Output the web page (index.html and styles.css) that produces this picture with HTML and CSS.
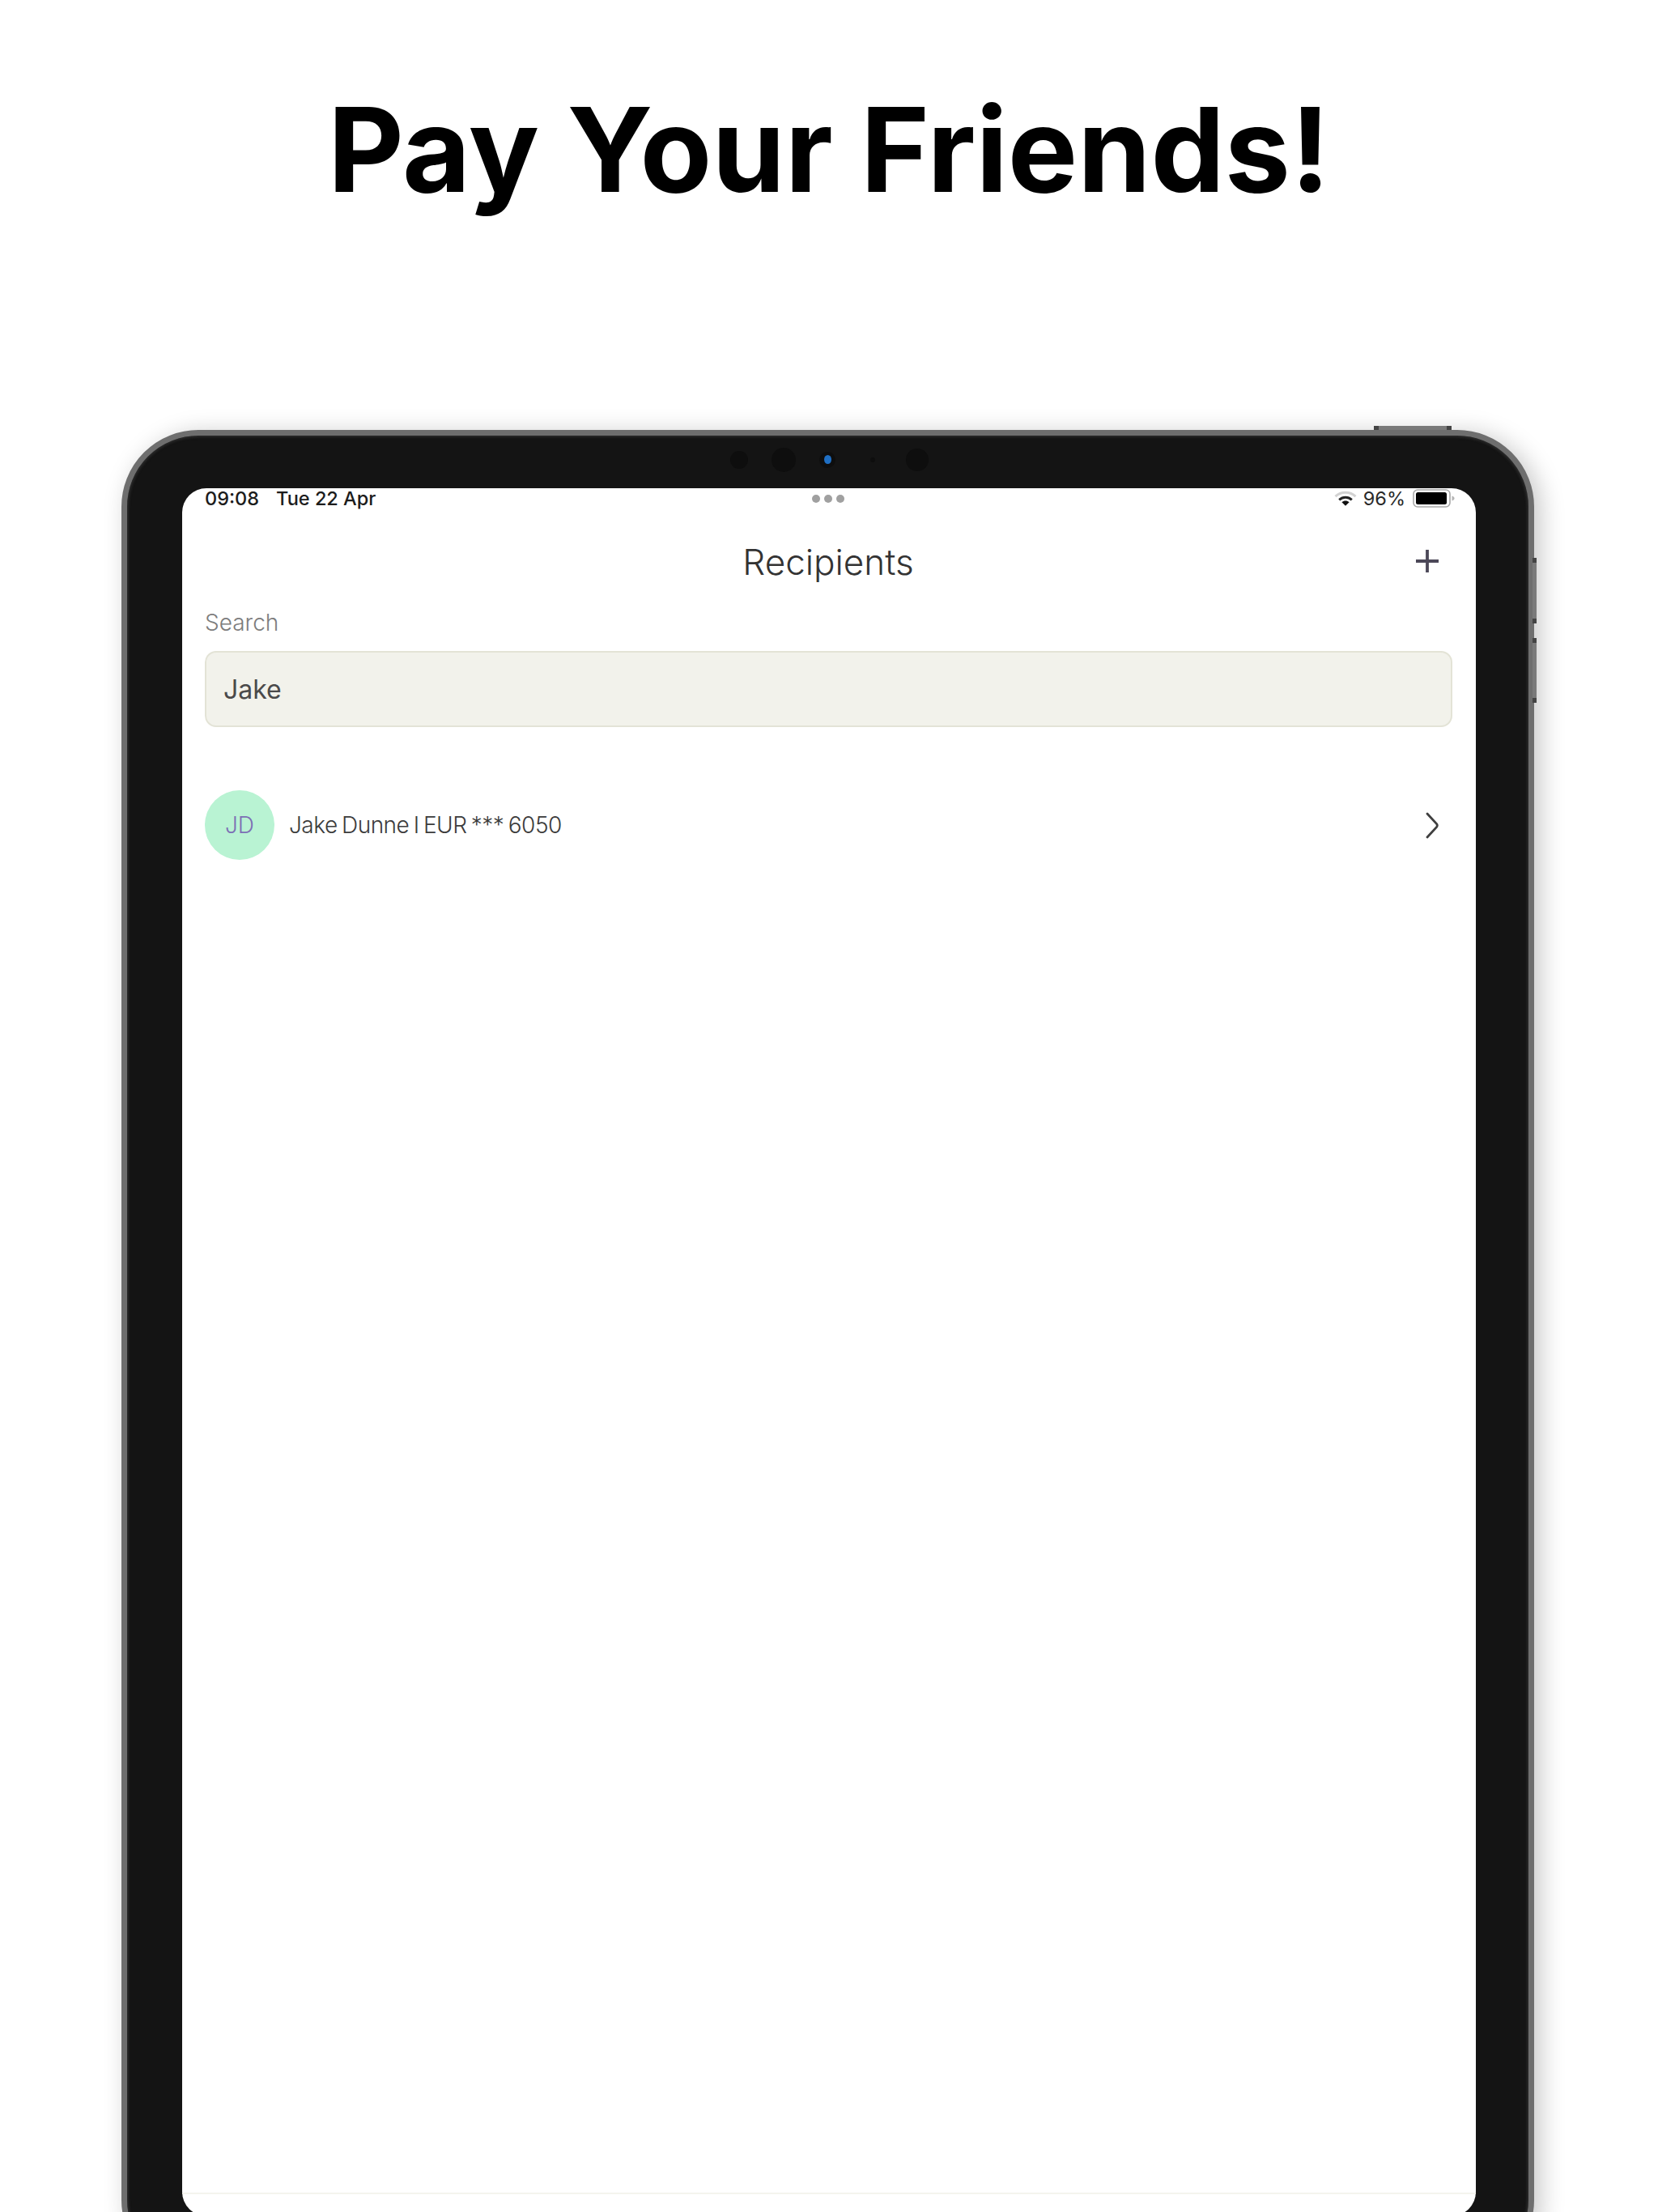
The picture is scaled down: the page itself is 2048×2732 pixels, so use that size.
FILE: index.html
```html
<!DOCTYPE html>
<html lang="en">
<head>
<meta charset="utf-8">
<title>Pay Your Friends!</title>
<link rel="stylesheet" href="styles.css">
</head>
<body>
<header class="hero"><h1>Pay Your Friends!</h1></header>
<div class="device">
  <span class="btn btn-top"><i></i><i></i></span>
  <span class="btn btn-side btn-vol-up"><i></i><i></i></span>
  <span class="btn btn-side btn-vol-down"><i></i><i></i></span>
  <div class="bezel-top">
    <span class="sensor s1"></span>
    <span class="sensor s2"></span>
    <span class="sensor s3"><b></b></span>
    <span class="sensor s4"></span>
    <span class="sensor s5"></span>
  </div>
  <div class="screen">
    <div class="status">
      <div class="status-left"><span>09:08</span><span>Tue 22 Apr</span></div>
      <div class="status-dots"><i></i><i></i><i></i></div>
      <div class="status-right">
        <svg class="wifi" viewBox="0 0 28 19" width="28" height="19" aria-hidden="true">
          <path d="M1.5 7.2C8.5 .6 19.5 .6 26.5 7.2" fill="none" stroke="#d2d2d2" stroke-width="3"/>
          <path d="M6.2 11.3C10.8 7.3 17.2 7.3 21.8 11.3" fill="none" stroke="#222" stroke-width="3"/>
          <path d="M9.4 14.2C12.3 11.9 15.7 11.9 18.6 14.2L14 18.8Z" fill="#111"/>
        </svg>
        <span class="pct">96%</span>
        <svg class="battery" viewBox="0 0 52 23" width="52" height="23" aria-hidden="true">
          <rect x="1" y="1" width="45" height="21" rx="5" fill="#fff" stroke="#a8a8a8" stroke-width="1.6"/>
          <rect x="4" y="4" width="38" height="15" rx="2.5" fill="#000"/>
          <path d="M48.5 8.5C50.5 9.2 51.5 10.2 51.5 11.5S50.5 13.8 48.5 14.5Z" fill="#b5b5b5"/>
        </svg>
      </div>
    </div>
    <div class="titlebar">
      <h2>Recipients</h2>
      <svg class="plus" viewBox="0 0 28 28" width="28" height="28" aria-hidden="true"><path d="M14 0V28M0 14H28" stroke="#4c4858" stroke-width="3.8" fill="none"/></svg>
    </div>
    <main class="content">
      <label class="search-label" for="q">Search</label>
      <div class="search-box" id="q">Jake</div>
      <div class="row">
        <span class="avatar">JD</span>
        <span class="row-text">Jake Dunne I EUR *** 6050</span>
        <svg class="chev" viewBox="0 0 16 33" width="16" height="33" aria-hidden="true"><path d="M2 2L13.6 14.6Q15 16.5 13.6 18.4L2 31" fill="none" stroke="#3f3f3f" stroke-width="2.8" stroke-linecap="round"/></svg>
      </div>
    </main>
    <div class="foot"></div>
  </div>
</div>
</body>
</html>
```
FILE: styles.css
```css
* { box-sizing: border-box; }
html, body { margin: 0; padding: 0; }
body {
  width: 2048px;
  height: 2732px;
  overflow: hidden;
  background: #fff;
  font-family: Inter, "Liberation Sans", sans-serif;
}
.hero { height: 531px; padding-top: 105px; text-align: center; }
.hero h1 {
  margin: 0;
  font-size: 145px;
  line-height: 160px;
  font-weight: 700;
  color: #000;
}
.device {
  position: relative;
  margin-left: 150px;
  width: 1745px;
  height: 2281px;
  padding: 0 65px 68px 68px;
  background: #141414;
  border: 7px solid #6e6e6e;
  border-radius: 95px;
  box-shadow: 8px 4px 30px rgba(0, 0, 0, .22), inset 0 0 3px 2px #2a2a2a;
  display: flex;
  flex-direction: column;
}
.btn { position: absolute; background: #7a7a7a; display: flex; justify-content: space-between; }
.btn i { display: block; background: #444; }
.btn-top { left: 1540px; top: -12px; width: 96px; height: 5px; border-radius: 2px 2px 0 0; }
.btn-top i { width: 6px; height: 5px; }
.btn-side { flex-direction: column; left: 1736px; width: 5px; border-radius: 0 2px 2px 0; }
.btn-side i { width: 5px; height: 6px; }
.btn-vol-up { top: 151px; height: 81px; }
.btn-vol-down { top: 250px; height: 80px; }
.bezel-top { height: 65px; flex: none; display: flex; align-items: center; padding-left: 677px; padding-bottom: 6px; }
.sensor { display: block; border-radius: 50%; background: #0e0e0e; flex: none; }
.s1 { width: 22px; height: 22px; }
.s2 { width: 30px; height: 30px; margin-left: 29px; }
.s3 { width: 20px; height: 20px; margin-left: 29px; display: flex; align-items: center; justify-content: center; }
.s3 b { display: block; width: 9px; height: 11px; border-radius: 50%; background: #1f6fc4; }
.s4 { width: 6px; height: 6px; margin-left: 43px; }
.s5 { width: 28px; height: 28px; margin-left: 38px; }
.screen {
  width: 1598px;
  height: 2134px;
  flex: none;
  background: #fff;
  border-radius: 30px;
  display: flex;
  flex-direction: column;
}
.status {
  position: relative;
  height: 25px;
  flex: none;
  padding: 0 26px 0 28px;
  display: flex;
  align-items: center;
  justify-content: space-between;
  font-size: 23.5px;
  line-height: 25px;
  font-weight: 500;
  color: #1c1c1c;
}
.status-left { display: flex; gap: 21px; }
.status-dots { position: absolute; left: 778px; top: 8px; display: flex; gap: 5px; }
.status-dots i { display: block; width: 10px; height: 10px; border-radius: 50%; background: #a0a0a0; }
.status-right { display: flex; align-items: center; }
.wifi { margin-right: 8px; }
.pct { font-weight: 400; color: #2a2a2a; margin-right: 9px; }
.titlebar {
  position: relative;
  height: 118px;
  padding: 13px 2px 0 0;
  flex: none;
  display: flex;
  align-items: center;
  justify-content: center;
}
.titlebar h2 { margin: 0; font-size: 44px; font-weight: 300; color: #333; }
.plus { position: absolute; left: 1524px; top: 51px; }
.content { flex: 1; padding: 0 29px 0 28px; }
.search-label { display: block; height: 58px; padding-top: 5px; font-size: 28px; line-height: 36px; font-weight: 300; color: #7d7d7d; }
.search-box {
  height: 94px;
  padding-left: 21px;
  display: flex;
  align-items: center;
  font-size: 32px;
  font-weight: 400;
  color: #4a4a4a;
  background: #f2f2eb;
  border: 2px solid #e3e3d6;
  border-radius: 14px;
}
.row { display: flex; align-items: center; margin-top: 78px; height: 86px; }
.avatar {
  width: 86px;
  height: 86px;
  flex: none;
  border-radius: 50%;
  background: #b9f3d3;
  color: #7d6fb5;
  font-size: 28px;
  font-weight: 300;
  display: flex;
  align-items: center;
  justify-content: center;
}
.row-text { flex: 1; margin-left: 18px; font-size: 28px; letter-spacing: -.5px; word-spacing: -2px; font-weight: 300; color: #3c3c3c; }
.chev { margin-right: 17px; }
.foot { height: 29px; flex: none; border-top: 2px solid #f4f4ee; }
```
